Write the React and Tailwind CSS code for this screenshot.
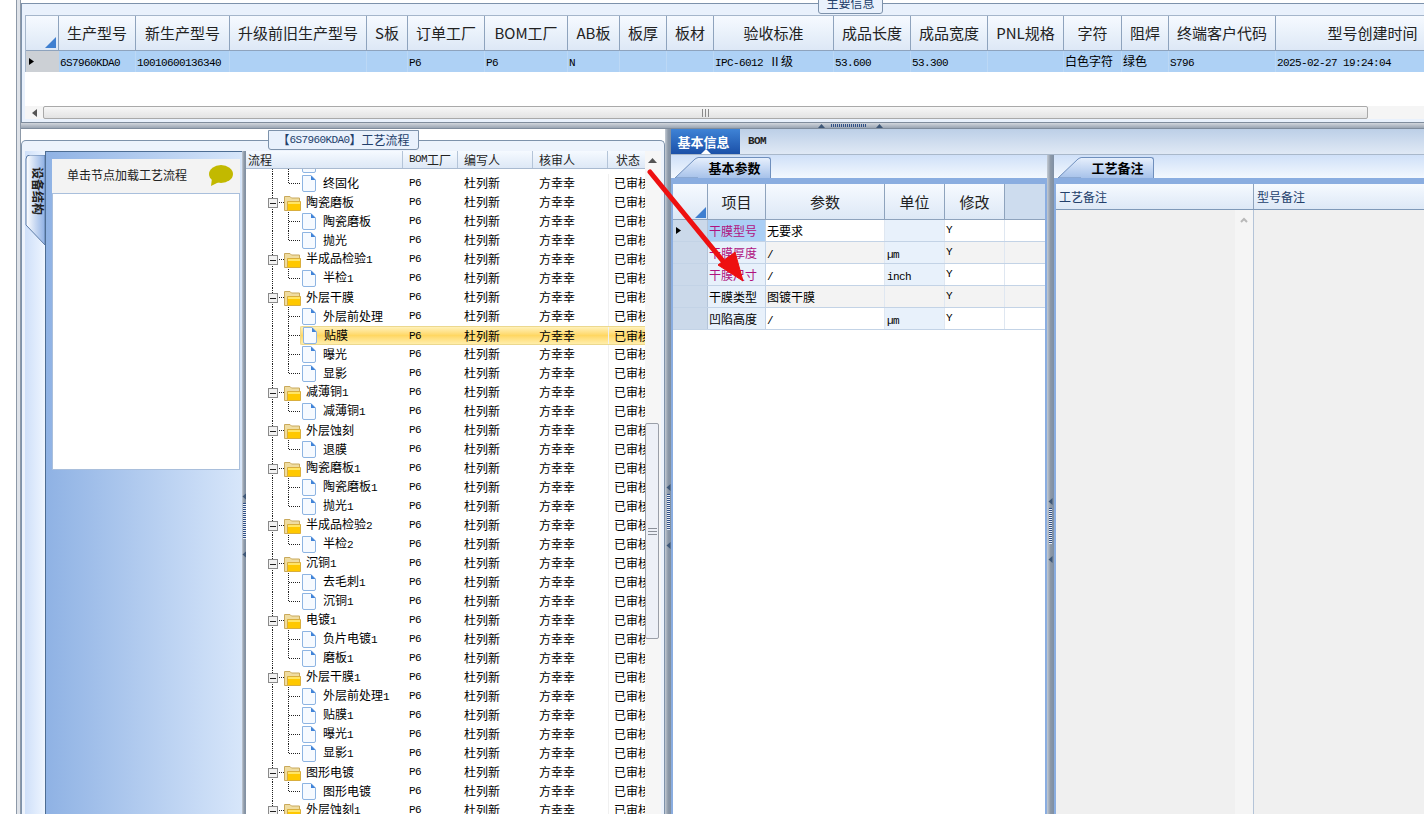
const CJK = '[font-family:"Noto_Sans_CJK_SC","Noto_Sans",sans-serif]';
const MONO = "[font-family:'Liberation_Mono',monospace] text-[11px] tracking-[-0.6px]";

const topCols = [
  ['生产型号', 77, '6S7960KDA0'],
  ['新生产型号', 94, '10010600136340'],
  ['升级前旧生产型号', 137, ''],
  ['S板', 41, ''],
  ['订单工厂', 77, 'P6'],
  ['BOM工厂', 83, 'P6'],
  ['AB板', 52, 'N'],
  ['板厚', 47, ''],
  ['板材', 47, ''],
  ['验收标准', 120, 'IPC-6012 Ⅱ级'],
  ['成品长度', 77, '53.600'],
  ['成品宽度', 77, '53.300'],
  ['PNL规格', 76, ''],
  ['字符', 58, '白色字符'],
  ['阻焊', 47, '绿色'],
  ['终端客户代码', 107, 'S796'],
  ['型号创建时间', 194, '2025-02-27 19:24:04'],
];

// f = folder, c = child, l = last child
const tree = [
  ['c', ''], ['l', '终固化'],
  ['f', '陶瓷磨板'], ['c', '陶瓷磨板'], ['l', '抛光'],
  ['f', '半成品检验1'], ['l', '半检1'],
  ['f', '外层干膜'], ['c', '外层前处理'], ['c', '贴膜', true], ['c', '曝光'], ['l', '显影'],
  ['f', '减薄铜1'], ['l', '减薄铜1'],
  ['f', '外层蚀刻'], ['l', '退膜'],
  ['f', '陶瓷磨板1'], ['c', '陶瓷磨板1'], ['l', '抛光1'],
  ['f', '半成品检验2'], ['l', '半检2'],
  ['f', '沉铜1'], ['c', '去毛刺1'], ['l', '沉铜1'],
  ['f', '电镀1'], ['c', '负片电镀1'], ['l', '磨板1'],
  ['f', '外层干膜1'], ['c', '外层前处理1'], ['c', '贴膜1'], ['c', '曝光1'], ['l', '显影1'],
  ['f', '图形电镀'], ['l', '图形电镀'],
  ['f', '外层蚀刻1'],
];

const params = [
  ['干膜型号', '无要求', '', true],
  ['干膜厚度', '/', 'µm', true],
  ['干膜尺寸', '/', 'inch', true],
  ['干膜类型', '图镀干膜', '', false],
  ['凹陷高度', '/', 'µm', false],
];

// ascii runs are drawn narrower, like the bitmap latin of the original font
function Mixed({ text }) {
  return text.split(/([\x00-\x7f]+)/).map((part, i) =>
    /^[\x00-\x7f]+$/.test(part)
      ? <span key={i} className={`${MONO} whitespace-pre`}>{part}</span>
      : <span key={i}>{part}</span>
  );
}

function FileIcon() {
  return (
    <svg width="15" height="17" viewBox="0 0 15 17" className="ml-[1px] shrink-0">
      <path d="M1.5.5H10L14.5 5V15a1.5 1.5 0 0 1-1.5 1.5H3A1.5 1.5 0 0 1 1.5 15Z" fill="#f6faff" stroke="#8db4e2" />
      <path d="M10 .5V5H14.5Z" fill="#3f83d8" />
    </svg>
  );
}

function FolderIcon() {
  return (
    <svg width="17" height="16" viewBox="0 0 17 16" className="shrink-0">
      <path d="M.5 15.5V1.5H6L7.5 3H15.5V15.5Z" fill="#efdca0" stroke="#c9a95c" />
      <path d="M3.5 6.5H16.5V15.5H3.5Z" fill="#ffc800" stroke="#d9ae3c" />
      <path d="M4 7H16V9H4Z" fill="#ffe566" />
    </svg>
  );
}

function Connector({ kind }) {
  if (kind === 'f') {
    return (
      <svg width="38" height="19" className="shrink-0" shapeRendering="crispEdges">
        <path d="M26.5 0V19M31 9.5H38" stroke="#222" strokeDasharray="1 1" fill="none" />
        <rect x="22.5" y="5.5" width="9" height="9" fill="#f2f2f2" stroke="#8a8a8a" />
        <path d="M24 10H30" stroke="#222" />
      </svg>
    );
  }
  return (
    <svg width="54" height="19" className="shrink-0" shapeRendering="crispEdges">
      <path d={`M26.5 0V19M42.5 0V${kind === 'l' ? 9.5 : 19}M42.5 9.5H54`} stroke="#222" strokeDasharray="1 1" fill="none" />
    </svg>
  );
}

const selGrad = 'bg-linear-to-b from-[#fff1b8] via-[#ffd762] to-[#ffeeaa] border-y border-[#ecd88e]';

function TreeRow({ kind, label, selected }) {
  return (
    <div className="flex h-[19px] shrink-0 text-[12px] leading-[17px] text-black">
      <div className="flex w-[157px] shrink-0 overflow-hidden">
        <Connector kind={kind} />
        <div className={`flex flex-1 items-center ${selected ? `rounded-l-[2px] border-l ${selGrad}` : ''}`}>
          {kind === 'f' ? <FolderIcon /> : <FileIcon />}
          {label && <span className={`pb-[2px] whitespace-nowrap ${kind === 'f' ? 'ml-[5px]' : 'ml-[7px]'}`}><Mixed text={label} /></span>}
        </div>
      </div>
      {/* the row cut off under the header only shows its icon */}
      {label && (
        <div className={`flex flex-1 ${selected ? selGrad : ''}`}>
          <div className={`w-[55px] shrink-0 pl-[6px] leading-[19px] ${MONO}`}>P6</div>
          <div className="w-[75px] shrink-0 pl-[6px]">杜列新</div>
          <div className="w-[75px] shrink-0 pl-[6px]">方幸幸</div>
          <div className="w-[37px] shrink-0 overflow-hidden whitespace-nowrap border-l border-[#f0f0f0] pl-[5px]">已审核</div>
        </div>
      )}
    </div>
  );
}

function VGrip({ top }) {
  return (
    <div className="flex h-full w-full justify-center bg-linear-to-r from-[#c4cbd4] via-[#8d99a8] to-[#7f8fa3]" style={{ paddingTop: top }}>
      <svg width="5" height="66" viewBox="0 0 5 66" className="shrink-0">
        <path d="M4.5 0V7L.5 3.5ZM4.5 58V65L.5 61.5Z" fill="#3f5878" />
        <path d="M2.5 10V46" stroke="#e9eef5" strokeWidth="3" />
        <path d="M2.5 10V46" stroke="#2f4f86" strokeWidth="3" strokeDasharray="1 1" />
      </svg>
    </div>
  );
}

function SubTab({ label, id }) {
  return (
    <div className="flex h-[23px] shrink-0 items-end bg-linear-to-b from-[#cfe0f8] to-[#f3f8fe] pl-[4px]">
      <svg width="24" height="21" className="shrink-0">
        <defs>
          <linearGradient id={id} x1="0" x2="0" y1="0" y2="1">
            <stop offset="0" stopColor="#e6effc" />
            <stop offset="1" stopColor="#a7c2ea" />
          </linearGradient>
        </defs>
        <path d="M0 21L20 2Q22 .5 24 .5V21Z" fill={`url(#${id})`} stroke="#6f8fbd" />
        <path d="M23 1H24V21H23Z" fill={`url(#${id})`} />
      </svg>
      <div className="flex h-[21px] w-[72px] items-center justify-center rounded-tr-[3px] border-t border-r border-[#6f8fbd] bg-linear-to-b from-[#e6effc] to-[#a7c2ea] text-[13px] font-bold text-black">
        {label}
      </div>
    </div>
  );
}

const headGrad = 'bg-linear-to-b from-[#f6faff] to-[#dde8f6]';

function TopPanel() {
  return (
    <div className="relative h-[122px] shrink-0 overflow-hidden bg-white pt-[3px]">
      <div className="flex h-[119px] flex-col border-t border-l border-[#7d92ab] bg-[#e9f1fc] pl-[3px]">
        <div className="mt-[11px] flex h-[36px] shrink-0 overflow-hidden border-t border-l border-[#a5b6cb]">
          <div className={`flex w-[33px] shrink-0 items-end justify-end border-r border-b border-[#8ea3bd] pr-[2px] pb-[2px] ${headGrad}`}>
            <svg width="11" height="11"><path d="M0 11L11 0V11Z" fill="#3f7fd0" /></svg>
          </div>
          {topCols.map(([h, w]) => (
            <div key={h} style={{ width: w }} className={`flex shrink-0 items-center justify-center border-r border-b border-[#8ea3bd] text-[15px] whitespace-nowrap text-[#222] ${headGrad}`}>
              {h}
            </div>
          ))}
        </div>
        <div className="flex h-[21px] shrink-0 overflow-hidden border-l border-[#a5b6cb] bg-[#aed1f5] text-[12px] leading-[20px] text-black">
          <div className="flex w-[33px] shrink-0 items-center bg-[#ccd0d5] pl-[3px]">
            <svg width="5" height="7"><path d="M0 0L5 3.5L0 7Z" fill="#000" /></svg>
          </div>
          {topCols.map(([h, w, v]) => (
            <div key={h} style={{ width: w }} className="shrink-0 overflow-hidden border-r border-[#bcd8f5] pl-[1px] whitespace-nowrap">
              <Mixed text={v} />
            </div>
          ))}
        </div>
        <div className="h-[34px] shrink-0 bg-white" />
        <div className="flex h-[13px] shrink-0 items-center bg-[#f5f5f5]">
          <div className="flex w-[18px] shrink-0 justify-center">
            <svg width="5" height="8"><path d="M5 0V8L0 4Z" fill="#555" /></svg>
          </div>
          <div className="flex h-[13px] w-[1325px] shrink-0 items-center justify-center rounded-[2px] border border-[#a9a9a9] bg-linear-to-b from-[#f7f7f7] to-[#e3e3e3]">
            <svg width="7" height="8" shapeRendering="crispEdges"><path d="M.5 0V8M3.5 0V8M6.5 0V8" stroke="#8a8a8a" /></svg>
          </div>
        </div>
      </div>
      <div className="absolute top-[-8px] left-[797px] flex h-[22px] w-[65px] items-center justify-center rounded-b-[3px] border border-[#7d92ab] bg-[#e9f1fc] text-[12px] text-[#23406b]">
        主要信息
      </div>
    </div>
  );
}

function HSplit() {
  return (
    <div className="flex h-[7px] shrink-0 items-center border-y border-[#7f8c9c] bg-linear-to-b from-[#d2d6dc] to-[#9aa5b3] pl-[797px]">
      <svg width="66" height="5" viewBox="0 0 66 5">
        <path d="M0 5H7L3.5 1ZM58 5H65L61.5 1Z" fill="#3f5878" />
        <path d="M13 2.5H48" stroke="#2f4f86" strokeWidth="3" strokeDasharray="1 1" />
      </svg>
    </div>
  );
}

function Sidebar() {
  return (
    <div className="flex h-full w-[217px] shrink-0">
      <div className="w-[20px] shrink-0 bg-linear-to-r from-[#cfe0f9] to-[#eef5ff] pt-[4px]">
        <div className="relative flex h-[90px] w-[20px] justify-center pt-[12px] pl-[5px]">
          <svg width="20" height="90" className="absolute top-0 left-0">
            <defs>
              <linearGradient id="vtab" x1="0" x2="1" y1="0" y2="0">
                <stop offset="0" stopColor="#ffffff" />
                <stop offset="1" stopColor="#8eb0e4" />
              </linearGradient>
            </defs>
            <path d="M20 0H5Q1 0 1 4V70L20 90Z" fill="url(#vtab)" stroke="#5d7da8" />
          </svg>
          <span className="relative text-[12px] leading-[12px] font-bold text-[#222] [text-orientation:sideways] [writing-mode:vertical-rl]">设备结构</span>
        </div>
      </div>
      <div className="flex-1 border-t border-l border-[#4d6d93] bg-linear-to-r from-[#8fb2e4] to-[#d7e6fa] pt-[7px] pr-[2px] pl-[6px]">
        <div className="flex h-[34px] items-center justify-between bg-[#f3f3f3] pr-[7px] pb-[2px] pl-[15px] text-[12px] text-[#222]">
          单击节点加载工艺流程
          <svg width="24" height="21" viewBox="0 0 24 21">
            <ellipse cx="12" cy="9" rx="12" ry="9" fill="#c2b900" />
            <path d="M3 13L2 21L12 16Z" fill="#c2b900" />
          </svg>
        </div>
        <div className="h-[277px] border border-[#a9bfdc] bg-white" />
      </div>
    </div>
  );
}

function TreeTable() {
  const headCell = 'flex shrink-0 items-center border-r border-[#b4c4d8] text-[12px] text-[#222] whitespace-nowrap';
  return (
    <div className="flex h-full w-[415px] shrink-0 bg-white">
      <div className="flex w-[399px] shrink-0 flex-col overflow-hidden">
        <div className={`flex h-[18px] shrink-0 border-b border-[#a9bad0] ${headGrad}`}>
          <div className={`${headCell} w-[157px] pl-[2px]`}>流程</div>
          <div className={`${headCell} w-[55px] justify-center`}><Mixed text="BOM工厂" /></div>
          <div className={`${headCell} w-[75px] pl-[6px]`}>编写人</div>
          <div className={`${headCell} w-[75px] pl-[6px]`}>核审人</div>
          <div className="flex w-[37px] shrink-0 items-center pl-[8px] text-[12px] whitespace-nowrap text-[#222]">状态</div>
        </div>
        <div className="min-h-0 flex-1 overflow-hidden">
          <div className="mt-[-14px] flex flex-col">
            {tree.map(([kind, label, selected], i) => (
              <TreeRow key={i} kind={kind} label={label} selected={selected} />
            ))}
          </div>
        </div>
      </div>
      <div className="flex w-[16px] shrink-0 flex-col items-start bg-[#f6f6f6]">
        <div className="flex h-[18px] w-[14px] items-center justify-center">
          <svg width="9" height="5"><path d="M0 5L4.5 0L9 5Z" fill="#555" /></svg>
        </div>
        <div className="mt-[254px] flex h-[216px] w-[14px] items-center justify-center rounded-[2px] border border-[#9a9fa8] bg-[#edf0f7]">
          <svg width="9" height="7" shapeRendering="crispEdges"><path d="M0 .5H9M0 3.5H9M0 6.5H9" stroke="#8a8f98" /></svg>
        </div>
      </div>
    </div>
  );
}

function BottomLeft() {
  return (
    <div className="relative w-[644px] shrink-0 bg-white pt-[11px]">
      <div className="h-full rounded-tl-[5px] rounded-tr-[5px] border-t border-r border-l border-[#7d92ab] bg-[#edf3fc] pt-[10px] pr-[3px] pl-[3px]">
        <div className="flex h-full">
          <Sidebar />
          <div className="h-full w-[4px] shrink-0"><VGrip top={342} /></div>
          <TreeTable />
        </div>
      </div>
      <div className="absolute top-[1px] left-[247px] flex h-[20px] w-[151px] items-center justify-center rounded-b-[3px] border border-[#7d92ab] bg-[#e9f1fc] text-[12px] text-[#23406b]">
        <Mixed text="【6S7960KDA0】工艺流程" />
      </div>
    </div>
  );
}

function ParamTable() {
  const head = `flex shrink-0 items-center justify-center border-r border-b border-[#8ea3bd] text-[15px] text-[#222] ${headGrad}`;
  return (
    <div className="flex flex-1 flex-col bg-white">
      <div className="flex h-[36px] shrink-0">
        <div className={`w-[35px] items-end justify-end pr-[1px] pb-[1px] ${head}`}>
          <svg width="11" height="11"><path d="M0 11L11 0V11Z" fill="#3f7fd0" /></svg>
        </div>
        <div className={`w-[58px] pt-[1px] ${head}`}>项目</div>
        <div className={`w-[119px] pt-[1px] ${head}`}>参数</div>
        <div className={`w-[60px] pt-[1px] ${head}`}>单位</div>
        <div className={`w-[60px] pt-[1px] ${head}`}>修改</div>
        <div className="flex-1 border-b border-[#8ea3bd] bg-[#cddcee]" />
      </div>
      {params.map(([name, value, unit, pink], i) => (
        <div key={name} className={`flex h-[22px] shrink-0 border-b border-[#c3d3e6] text-[12px] leading-[21px] ${i % 2 ? 'bg-[#f3f3f3]' : 'bg-white'}`}>
          <div className="flex w-[35px] shrink-0 items-center border-r border-[#b4c4d8] bg-[#cbd9ea] pl-[3px]">
            {i === 0 && <svg width="5" height="7"><path d="M0 0L5 3.5L0 7Z" fill="#000" /></svg>}
          </div>
          <div className={`w-[58px] shrink-0 border-r border-[#c3d3e6] pl-[1px] ${i === 0 ? 'bg-[#abcff5]' : 'bg-[#e8f1fb]'} ${pink ? 'text-[#b0127f]' : 'text-black'}`}>{name}</div>
          <div className="w-[119px] shrink-0 border-r border-[#dfe7f1] pl-[1px] text-black"><Mixed text={value} /></div>
          <div className={`w-[60px] shrink-0 border-r border-[#dfe7f1] pl-[2px] text-black ${i === 3 ? '' : 'bg-[#e8f1fb]'}`}>
            <span className={MONO}>{unit}</span>
          </div>
          <div className={`w-[60px] shrink-0 border-r border-[#dfe7f1] pl-[1px] text-black ${MONO}`}>Y</div>
          <div className="flex-1" />
        </div>
      ))}
    </div>
  );
}

function BottomRight() {
  return (
    <div className="flex min-w-0 flex-1 flex-col bg-white">
      <div className="flex h-[26px] shrink-0 items-start border-b border-[#a9b8ca] bg-linear-to-b from-[#bccfe7] to-[#e0e9f5]">
        <div className="relative flex h-[25px] w-[69px] items-center justify-center bg-linear-to-b from-[#3f83d6] to-[#1b50a8] pr-[4px] text-[13px] font-bold text-white">
          基本信息
          <svg width="10" height="5" className="absolute bottom-0 left-[30px]"><path d="M0 5L5 0L10 5Z" fill="#fff" /></svg>
        </div>
        <div className={`ml-[8px] flex h-[25px] items-center font-bold text-[#222] ${MONO}`}>BOM</div>
      </div>
      <div className="flex flex-1">
        <div className="flex w-[376px] shrink-0 flex-col">
          <SubTab label="基本参数" id="tabA" />
          <div className="flex flex-1 flex-col bg-[#8aade0] px-[2px] pt-[6px]">
            <ParamTable />
          </div>
        </div>
        <div className="w-[7px] shrink-0"><VGrip top={343} /></div>
        <div className="flex min-w-0 flex-1 flex-col">
          <SubTab label="工艺备注" id="tabB" />
          <div className="flex flex-1 flex-col bg-[#8aade0] pt-[6px] pl-[2px]">
            <div className="flex flex-1 flex-col bg-[#f0f0f0]">
              <div className={`flex h-[26px] shrink-0 border-b border-[#7f99b8] text-[12px] text-[#23406b] ${headGrad}`}>
                <div className="flex w-[198px] shrink-0 items-center border-r border-[#8ea3bd] pl-[3px]">工艺备注</div>
                <div className="flex flex-1 items-center pl-[3px]">型号备注</div>
              </div>
              <div className="flex flex-1">
                <div className="flex w-[198px] shrink-0 justify-end border-r border-[#b4c4d8]">
                  <div className="flex w-[18px] justify-center bg-[#f5f5f5] pt-[7px]">
                    <svg width="8" height="6"><path d="M1 5L4 2L7 5" fill="none" stroke="#b9b9b9" strokeWidth="2" /></svg>
                  </div>
                </div>
                <div className="flex-1" />
              </div>
            </div>
          </div>
        </div>
      </div>
    </div>
  );
}

export default function App() {
  return (
    <div className={`relative flex h-[814px] w-[1424px] overflow-hidden bg-white ${CJK}`}>
      <div className="w-[16px] shrink-0" />
      <div className="w-[5px] shrink-0 border-x border-[#8d99a8] bg-[#dfe3e9]" />
      <div className="flex min-w-0 flex-1 flex-col">
        <TopPanel />
        <HSplit />
        <div className="flex min-h-0 flex-1">
          <BottomLeft />
          <div className="w-[6px] shrink-0"><VGrip top={355} /></div>
          <BottomRight />
        </div>
      </div>
      {/* red annotation arrow on top of the screenshot */}
      <svg width="1424" height="814" className="pointer-events-none absolute top-0 left-0">
        <path d="M650 172L727 266" stroke="#ee1010" strokeWidth="5" strokeLinecap="round" />
        <path d="M743 281L718 265L735 252Z" fill="#ee1010" stroke="#ee1010" strokeWidth="1" />
      </svg>
    </div>
  );
}
